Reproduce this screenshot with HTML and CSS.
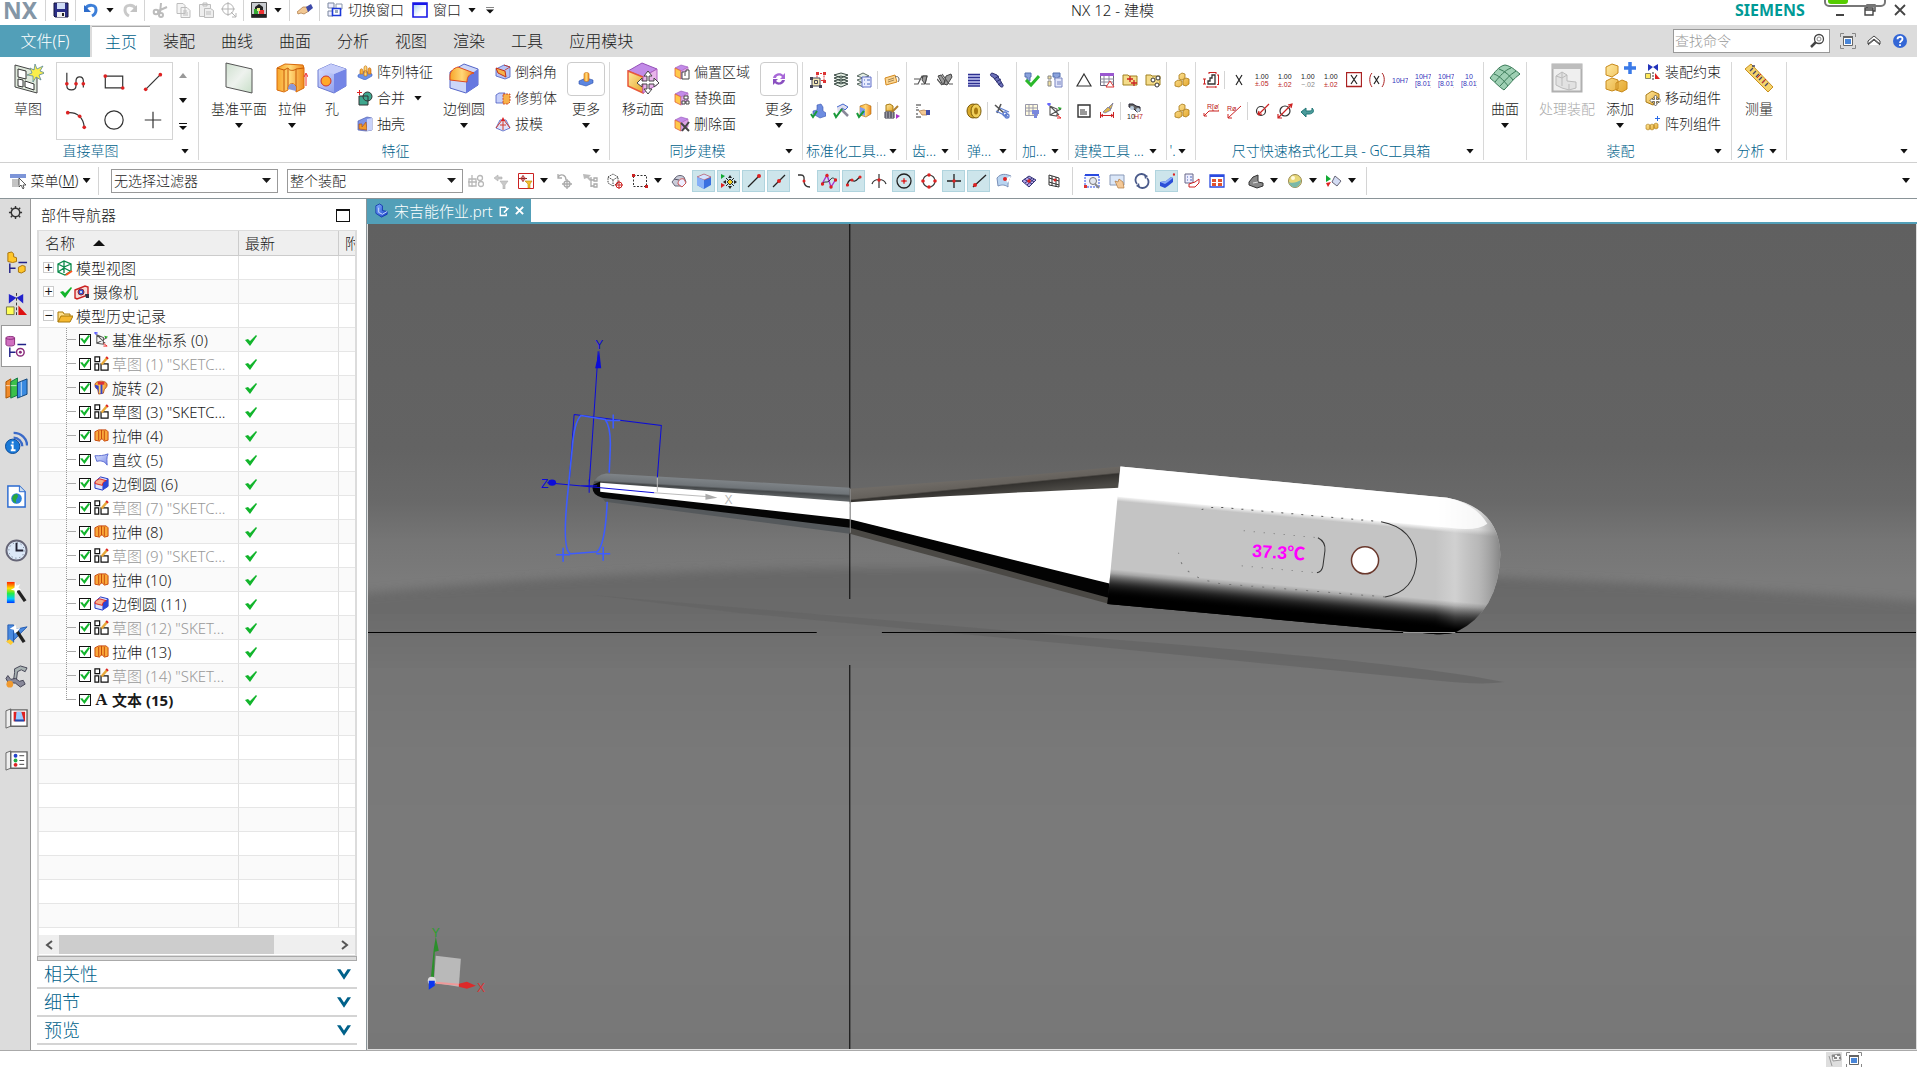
FILE: index.html
```html
<!DOCTYPE html>
<html lang="zh-CN">
<head>
<meta charset="utf-8">
<title>NX 12 - 建模</title>
<link rel="stylesheet" href="styles.css">
</head>
<body>
<svg class="defs" aria-hidden="true">
<defs>
<linearGradient id="gOr" x2="1"><stop offset="0" stop-color="#f7a52a"/><stop offset=".5" stop-color="#ffd777"/><stop offset="1" stop-color="#f08a1c"/></linearGradient>
<linearGradient id="gBl" x2="1" y2="1"><stop offset="0" stop-color="#dfe6ff"/><stop offset="1" stop-color="#7b8ce8"/></linearGradient>
<linearGradient id="gBd" y2="1" x2="1"><stop offset="0" stop-color="#7fb0ff"/><stop offset="1" stop-color="#1a3fc8"/></linearGradient>
<linearGradient id="gYe" x2="1" y2="1"><stop offset="0" stop-color="#ffe9a0"/><stop offset="1" stop-color="#e5a72c"/></linearGradient>
<linearGradient id="gGn" x2="1" y2="1"><stop offset="0" stop-color="#cfe0cf"/><stop offset=".5" stop-color="#eef2ee"/><stop offset="1" stop-color="#c8dfc8"/></linearGradient>
<linearGradient id="gWin" x2="1" y2="1"><stop offset="0" stop-color="#9cc8f4"/><stop offset=".6" stop-color="#fff"/></linearGradient>
<linearGradient id="gRb" y2="1" x2="0"><stop offset="0" stop-color="#f20"/><stop offset=".3" stop-color="#fd0"/><stop offset=".55" stop-color="#2e4"/><stop offset=".8" stop-color="#0cf"/><stop offset="1" stop-color="#03f"/></linearGradient>
</defs>
<symbol id="save" viewBox="0 0 16 16"><path d="M1 1h14v14H2L1 14z" fill="#2b2f86" stroke="#14143c"/><path d="M4 1h8v6H4z" fill="#cfdcf5"/><path d="M4 10h8v5H4z" fill="#eee"/><path d="M9 11h2v3H9z" fill="#222"/></symbol>
<symbol id="undo" viewBox="0 0 16 16"><path d="M2 7C5 2 13 2 13 8c0 3-2 5-4 6" fill="none" stroke="#3d7fd8" stroke-width="3"/><path d="M1 3v7h7z" fill="#2d6ccb"/></symbol>
<symbol id="redo" viewBox="0 0 16 16"><path d="M14 7C11 2 3 2 3 8c0 3 2 5 4 6" fill="none" stroke="#c9c9c9" stroke-width="3"/><path d="M15 3v7H8z" fill="#c3c3c3"/></symbol>
<symbol id="cut" viewBox="0 0 16 16"><g fill="none" stroke="#bcbcbc" stroke-width="2"><circle cx="4" cy="10" r="2.3"/><circle cx="9" cy="13" r="2"/><path d="M6 9l9-4M8 11L9 1"/></g></symbol>
<symbol id="copy" viewBox="0 0 16 16"><g fill="#f4f4f4" stroke="#bdbdbd"><path d="M2 1.500h6l2 2v8H2zM6 5.500h6l3 3v7H6z"/><path d="M8 9h4M8 11h5M8 13h5"/></g></symbol>
<symbol id="paste" viewBox="0 0 16 16"><g fill="#eee" stroke="#bdbdbd"><path d="M1.500 2.500h11v12h-11zM5 1h4v3H5z"/><path d="M6.500 6.500h6l3 2v7h-9z"/><path d="M8 10h5M8 12h5"/></g></symbol>
<symbol id="target" viewBox="0 0 16 16"><g fill="none" stroke="#b5b5b5"><circle cx="7" cy="7" r="5.500"/><path d="M7 0v14M0 7h14M10 10l5 5M15 11v4h-4"/></g></symbol>
<symbol id="touch" viewBox="0 0 16 16"><path d="M.5.500h15v15H.5z" fill="#c9ccd0" stroke="#444"/><path d="M1 12h14v3H1z" fill="#222"/><path d="M4 5l4-3 4 3v4H4z" fill="#222"/><path d="M3 7h4v5H3z" fill="#3a3"/><path d="M8 8h5v4H8z" fill="#e33"/><path d="M6 6h3v3H6z" fill="#ee8"/></symbol>
<symbol id="hand" viewBox="0 0 16 16"><path d="M0 10l6-5 4 0 2 4-5 3-3-1-3 1z" fill="#f2c894" stroke="#a87440" stroke-width=".7"/><path d="M9 5l5-3 2 4-5 4z" fill="#3c48a8"/></symbol>
<symbol id="switch" viewBox="0 0 16 16"><path d="M1 1h6v5H1zM1 9h5v5H1z" fill="#eef" stroke="#7b879e"/><path d="M9 2h6v5H9z" fill="#fff" stroke="#8a96aa"/><path d="M5.500 6.500h8v7h-8z" fill="#fff" stroke="#1d39d8" stroke-width="1.600"/><path d="M8 8h3v3H8z" fill="#9ab"/></symbol>
<symbol id="win" viewBox="0 0 16 16"><path d="M1 1h14v14H1z" fill="url(#gWin)" stroke="#1717e8" stroke-width="1.600"/><path d="M1 2h14" stroke="#1717e8" stroke-width="2"/></symbol>
<symbol id="mag" viewBox="0 0 16 16"><circle cx="10" cy="6" r="4.500" fill="none" stroke="#444" stroke-width="1.300"/><circle cx="10" cy="6" r="2" fill="none" stroke="#888"/><path d="M7 9l-5 5" stroke="#444" stroke-width="2.500"/></symbol>
<symbol id="full" viewBox="0 0 16 16"><path d="M.5 4V.5H4M12 .5h3.500V4M15.500 12v3.500H12M4 15.500H.5V12" fill="none" stroke="#888"/><path d="M3.500 3.500h9v9h-9z" fill="#fff" stroke="#666"/><path d="M5 6h6v5H5z" fill="#4a86d8"/><path d="M3 3h10v2H3z" fill="#666"/></symbol>
<symbol id="up" viewBox="0 0 16 16"><path d="M2 8l6-5 6 5v3L8 6l-6 5zM2 12l6-5 6 5" fill="#fff" stroke="#444"/></symbol>
<symbol id="help" viewBox="0 0 16 16"><circle cx="8" cy="8" r="7" fill="#3467d6"/><path d="M5.500 6.200C5.500 3 10.500 3 10.500 6c0 2-2.500 2-2.500 4M8 11.300v1.600" fill="none" stroke="#fff" stroke-width="1.800"/></symbol>
<symbol id="sketch" viewBox="0 0 32 32"><path d="M3 3l22 6v22L3 25z" fill="#dfe9dc" stroke="#444"/><path d="M6 7l8 2v8l-8-2zM6 17l5 1v7l-5-1zM13 19l9 3v6l-9-3z" fill="#fff" stroke="#333"/><path d="M23 2l2 5 6-3-3 5 5 2-6 2 2 5-5-3-3 5v-6l-6-1 5-2-2-5 4 2z" fill="#f9ee4a" stroke="#5c8a9a" stroke-width=".8"/></symbol>
<symbol id="profile" viewBox="0 0 24 24"><path d="M2 2v14c0 6 10 6 10 0V11c0-6 8-6 8 0v7" fill="none" stroke="#333" stroke-width="1.300"/><g fill="#d22"><circle cx="2" cy="14" r="2"/><circle cx="12" cy="14" r="2"/><circle cx="20" cy="14" r="2"/></g></symbol>
<symbol id="rect" viewBox="0 0 24 24"><path d="M2.500 5.500h19v13h-19z" fill="none" stroke="#333" stroke-width="1.300"/><g fill="#d22"><circle cx="2.500" cy="5.500" r="2"/><circle cx="21.500" cy="18.500" r="2"/></g></symbol>
<symbol id="line" viewBox="0 0 24 24"><path d="M4 20L20 4" stroke="#333" stroke-width="1.300"/><g fill="#d22"><circle cx="4" cy="20" r="2"/><circle cx="20" cy="4" r="2"/></g></symbol>
<symbol id="arc" viewBox="0 0 24 24"><path d="M3 4c10-1 17 5 18 16" fill="none" stroke="#333" stroke-width="1.300"/><g fill="#d22"><circle cx="3" cy="4" r="2"/><circle cx="16" cy="8" r="2"/><circle cx="21" cy="20" r="2"/></g></symbol>
<symbol id="circle" viewBox="0 0 24 24"><circle cx="12" cy="12" r="10" fill="none" stroke="#333" stroke-width="1.300"/></symbol>
<symbol id="plus" viewBox="0 0 24 24"><path d="M12 3v18M3 12h18" stroke="#333" stroke-width="1.300"/></symbol>
<symbol id="plane" viewBox="0 0 32 32"><path d="M3 1l26 6v24L3 25z" fill="url(#gGn)" stroke="#555"/></symbol>
<symbol id="extrude" viewBox="0 0 32 32"><path d="M1 6l8-4 18 1 1 3v20l-8 4V24c-4-5-8-2-8 4l-4 2-7-2z" fill="url(#gOr)" stroke="#d96a0a"/><path d="M1 6l7 2 4-2c1 3 6 3 8 1l8-1M8 8v21M12 7v20M20 7v22" fill="none" stroke="#c85b08"/><path d="M12 27c0-5 5-8 8-2v4z" fill="#8a98d8"/><path d="M30 24V12M28 15l2-4 2 4" fill="none" stroke="#e33"/></symbol>
<symbol id="hole" viewBox="0 0 32 32"><path d="M2 8l13-6 15 5v17l-12 7L2 25z" fill="url(#gBl)" stroke="#6d7bd0"/><path d="M18 12l12-5v17l-12 7z" fill="#7485e6"/><path d="M2 8l13-6 15 5-12 5z" fill="#c4ccfa"/><circle cx="10" cy="19" r="5" fill="#ffa928" stroke="#c33"/></symbol>
<symbol id="blend" viewBox="0 0 32 32"><path d="M2 10L16 2l14 5v16l-12 8-16-5z" fill="#ccd6f8" stroke="#5565c8"/><path d="M18 16l12-9v16l-12 8z" fill="#6678e0"/><path d="M2 18V14c0-5 4-8 8-9l16 6c-5 1-7 4-7 9z" fill="url(#gOr)" stroke="#e04a20"/></symbol>
<symbol id="patt" viewBox="0 0 16 16"><path d="M1 11l7-4 7 3v2l-7 4-7-3z" fill="#6d92e8" stroke="#3a5ec0" stroke-width=".6"/><g fill="url(#gOr)" stroke="#b86a10" stroke-width=".6"><path d="M3 7c0-3 3-3 3 0v3H3zM7 4c0-3 3-3 3 0v4H7zM7 8c0-2 3-2 3 0v4H7zM11 6c0-3 3-3 3 0v4h-3z"/></g></symbol>
<symbol id="unite" viewBox="0 0 16 16"><path d="M2 6h9v9H2z" fill="#3fa78e" stroke="#333"/><circle cx="10.500" cy="6.500" r="4.500" fill="#3fa78e" stroke="#333"/><path d="M6 6h5v5" fill="none" stroke="#333"/><path d="M2.500 0v5M0 2.500h5" stroke="#d22"/></symbol>
<symbol id="shell" viewBox="0 0 16 16"><path d="M1 5l9-4 5 1v12l-6 1-8-1z" fill="#7e93e6" stroke="#5060b0" stroke-width=".7"/><path d="M2 8h3v3l4-5 1 8-8-1z" fill="#f29a2a" stroke="#a52" stroke-width=".7"/><path d="M10 3l5-1v12l-5 1z" fill="#c9d3fa"/></symbol>
<symbol id="chamfer" viewBox="0 0 16 16"><path d="M1 5l8-4 6 2v10l-5 2-9-3z" fill="#b6c3f6" stroke="#4a5cc0" stroke-width=".8"/><path d="M1 4l9 3 1 6-8-4z" fill="#f7b24a" stroke="#c3301a"/><path d="M9 1l6 2-5 3" fill="none" stroke="#c3301a" stroke-width=".8"/></symbol>
<symbol id="trim" viewBox="0 0 16 16"><path d="M1 5l3-2h6v9l-2 1H1z" fill="#c6cffa" stroke="#4a5cc0" stroke-width=".8"/><path d="M8 4h7v8l-2 2H8z" fill="#f7b04a" stroke="#c3301a" stroke-width=".8" stroke-dasharray="2 1"/></symbol>
<symbol id="draft" viewBox="0 0 16 16"><path d="M1 12l4-8h6l4 8-7 3z" fill="#dfe3fc" stroke="#4a5cc0" stroke-width=".8"/><path d="M1 12L7 4M15 12L9 4M8 3v11M5 9h6" fill="none" stroke="#d43a2a"/><path d="M8 1l2 4H6z" fill="#d22"/></symbol>
<symbol id="more1" viewBox="0 0 16 16"><path d="M1 10l7-3 7 2v3l-7 3-7-2z" fill="#5d86e0" stroke="#2c4faa" stroke-width=".6"/><path d="M6 3c0-2 5-2 5 0v6c0 2-5 2-5 0z" fill="url(#gOr)" stroke="#c26a12" stroke-width=".6"/></symbol>
<symbol id="more2" viewBox="0 0 16 16"><path d="M2 7c1-5 8-6 10-3l2-2v6H9l2-2C9 4 6 4 5 7z" fill="#a868d8"/><path d="M14 9c-1 5-8 6-10 3l-2 2V8h5l-2 2c2 2 5 2 6-1z" fill="#8a50c0"/></symbol>
<symbol id="moveface" viewBox="0 0 32 32"><path d="M1 9L15 1l15 6-14 8z" fill="#c28be8" stroke="#9450b8"/><path d="M1 9l15 6v16L1 24z" fill="url(#gYe)" stroke="#e8583a" stroke-width="1.500"/><path d="M16 15l14-8v16l-14 8z" fill="#e8b4ea" stroke="#b060c0"/><path d="M21 9l4 5h-3v5h5v-3l5 5-5 4v-3h-5v5h3l-4 5-4-5h3v-5h-5v3l-5-4 5-5v3h5v-5h-3z" fill="#fff" stroke="#444"/></symbol>
<symbol id="face" viewBox="0 0 16 16"><path d="M1 4l6-3 7 2-6 4z" fill="#c28be8" stroke="#9450b8" stroke-width=".6"/><path d="M1 4l6 3v8l-6-3z" fill="#ffc94a" stroke="#e0603a" stroke-width=".8"/><path d="M7 7l7-4v8l-7 4z" fill="#dca5e6" stroke="#b060c0" stroke-width=".6"/></symbol>
<symbol id="offset" viewBox="0 0 16 16"><use href="#face"/><path d="M8 8h4V6h3v9H8zM11 9v3" fill="#fff" stroke="#444"/></symbol>
<symbol id="replace" viewBox="0 0 16 16"><use href="#face"/><path d="M10 6h4v3h-4zM8 11h3v3H8zM12 11h3v3h-3z" fill="#fff" stroke="#444"/></symbol>
<symbol id="delface" viewBox="0 0 16 16"><use href="#face"/><path d="M7 7l8 8M15 6l-7 9" stroke="#444" stroke-width="2"/></symbol>
<symbol id="s1" viewBox="0 0 16 16"><path d="M7 1.500h7v7H7z" fill="none" stroke="#d33" stroke-dasharray="2 1"/><path d="M2 6h8v8H2z" fill="#f4e9b8" stroke="#445"/><path d="M4.500 8.500h3v3h-3z" fill="none" stroke="#445"/><g fill="#445"><path d="M0 5h3v3H0zM0 13h3v3H0zM9 13h3v3H9z"/></g><path d="M6 0h3v3H6zM13 0h3v3h-3zM13 8h3v3h-3z" fill="#d33"/></symbol>
<symbol id="s2" viewBox="0 0 16 16"><g fill="#e4eee4" stroke="#3a4a44"><path d="M1 12l7-2 7 2-7 3zM1 9l7-2 7 2-7 3zM1 6l7-2 7 2-7 3zM1 3l7-2 7 2-7 3z"/></g></symbol>
<symbol id="s3" viewBox="0 0 16 16"><path d="M1 12l6-2 6 2-6 3zM1 8l6-2 6 2-6 3zM1 4l6-3 6 3-6 2z" fill="#e4eee4" stroke="#5a6a64"/><path d="M6 5h9v10H6z" fill="#e8ecff" stroke="#6270c8"/><path d="M8 8h1M11 8h3M8 12h1M11 12h3" stroke="#46b"/></symbol>
<symbol id="s4" viewBox="0 0 16 16"><path d="M1 6l10-3 2 7-11 3z" fill="#fbd590" stroke="#d48a20"/><path d="M4 8l6-2M4 10l6-2" stroke="#a85"/><path d="M11 5c4-2 5 3 3 5" fill="none" stroke="#666"/></symbol>
<symbol id="s5" viewBox="0 0 16 16"><path d="M7 2l4-1 2 3v4l3 2v3l-6 2-7-4V8l4-1z" fill="#6d8ce0" stroke="#3a56b0" stroke-width=".6"/><path d="M1 11l2 3 4-6" fill="none" stroke="#1a9a3a" stroke-width="2"/></symbol>
<symbol id="s6" viewBox="0 0 16 16"><path d="M4 4l6-3 5 3-3 3-3-2-4 7" fill="#dde" stroke="#4468d0"/><path d="M8 6l7 7" stroke="#889" stroke-width="2.500"/><path d="M1 10l2 4 6-8" fill="none" stroke="#1a9a3a" stroke-width="2"/></symbol>
<symbol id="s7" viewBox="0 0 16 16"><path d="M4 3l6-2 5 2v8l-5 3-6-2z" fill="url(#gOr)" stroke="#a86a10" stroke-width=".6"/><path d="M4 4l5 2v7l-5-2z" fill="#7d9cf0"/><path d="M1 10l2 4 5-6" fill="none" stroke="#1a9a3a" stroke-width="2"/></symbol>
<symbol id="s8" viewBox="0 0 16 16"><path d="M2 2l4-1 3 2v5H2z" fill="url(#gYe)" stroke="#a87a10"/><path d="M1 9h9v6H1z" fill="#fff" stroke="#334"/><path d="M1 11h9M1 13h9M4 9v6M7 9v6" stroke="#334"/><path d="M14 3L8 9" stroke="#b08030" stroke-width="2"/><path d="M12 11l4 2-4 3z" fill="#a3c"/></symbol>
<symbol id="g1" viewBox="0 0 16 16"><path d="M0 12h4l4-8h5l-2 8H7M0 7h6M8 4l4 6M12 12h4" fill="none" stroke="#555" stroke-width="1.200"/><path d="M9 4h4l-2 8-3-4z" fill="#999" stroke="#444"/></symbol>
<symbol id="g2" viewBox="0 0 16 16"><path d="M1 4l3-1 4 6-2 4zM9 4l5-2 1 3-5 8-3-1z" fill="#999" stroke="#444"/><path d="M0 7l5 6M5 2l7 10M12 12h4" fill="none" stroke="#555" stroke-width="1.200"/></symbol>
<symbol id="g3" viewBox="0 0 16 16"><path d="M2 2h5M2 7h3M2 14h5M3 4v1M3 10v2" stroke="#333"/><path d="M5 8l5-1 3 1v4H8z" fill="#f2c894" stroke="#a87440" stroke-width=".7"/><path d="M12 7h4v5h-4z" fill="#4450a8"/></symbol>
<symbol id="t1" viewBox="0 0 16 16"><path d="M2 2h12v12H2z" fill="#c9cdf4"/><path d="M2 2.500h12M2 5.500h12M2 8.500h12M2 11.500h12M2 14h12" stroke="#2c2f90" stroke-width="1.500"/></symbol>
<symbol id="t2" viewBox="0 0 16 16"><path d="M3 1c-3 1-1 4 1 4l7 9c1 2 4 1 3-1L8 3z" fill="#6a6fb8" stroke="#2c2f70"/><path d="M5 7l5-3M7 10l5-3M9 13l4-3" stroke="#2c2f70"/></symbol>
<symbol id="t3" viewBox="0 0 16 16"><ellipse cx="7" cy="8" rx="6" ry="7" fill="#d8a92a" stroke="#7a5a08"/><ellipse cx="10" cy="8" rx="5" ry="7" fill="#f0cf5a" stroke="#7a5a08"/><ellipse cx="10" cy="8" rx="2" ry="3.500" fill="#a87a10"/></symbol>
<symbol id="t4" viewBox="0 0 16 16"><path d="M1 2l9 8M7 1L3 10" stroke="#555" stroke-width="1.600"/><g fill="none" stroke="#5f7ed0" stroke-width="1.300"><circle cx="11" cy="11" r="2"/><circle cx="13" cy="13" r="2"/><path d="M2 8l12 6M6 5l9 4"/></g></symbol>
<symbol id="k1" viewBox="0 0 16 16"><path d="M1 1h6v4H6v4H3V5H1z" fill="#8aa2dc" stroke="#5570b0"/><path d="M2 8l5 5 8-9" fill="none" stroke="#2bb82b" stroke-width="3"/></symbol>
<symbol id="k2" viewBox="0 0 16 16"><path d="M6 1h7v4h-2v3H8V5H6z" fill="#8aa2dc" stroke="#5570b0"/><path d="M8 6h7v9H8z" fill="#e2e6fb" stroke="#7884c0"/><path d="M1 4h3v3H1zM1 9h3v5H1z" fill="#f0e0a0" stroke="#888"/><path d="M10 10h4M10 12h4" stroke="#7884c0"/></symbol>
<symbol id="k3" viewBox="0 0 16 16"><path d="M1.500 1.500h12v11h-12z" fill="#fffbe0" stroke="#99a"/><path d="M1 5h12M1 8h12M5 1v11M9 1v11" stroke="#99a"/><path d="M8 7h7v4h-2v4h-3v-4H8z" fill="#7a88dc"/></symbol>
<symbol id="csys" viewBox="0 0 16 16"><path d="M3 3v9l7 1V6zM3 12l11-6M3 3l9 9" fill="none" stroke="#555" stroke-width="1.100"/><path d="M0 1h4M2 0v3" stroke="#33f"/><path d="M11 4l4 1-3 2z" fill="#2a2"/><path d="M10 12l4 3M10 15h4" stroke="#e22"/></symbol>
<symbol id="m1" viewBox="0 0 16 16"><path d="M8 2l7 12H1z" fill="none" stroke="#333" stroke-width="1.200"/></symbol>
<symbol id="m2" viewBox="0 0 16 16"><path d="M1.500 1.500h13v12h-13z" fill="#fff" stroke="#667"/><path d="M1 1h14v3H1z" fill="#9a58d0"/><path d="M1 7h14M1 10h14M5 4v9M10 4v9" stroke="#889"/><path d="M11 9l4 6H7z" fill="#fff" stroke="#d33"/></symbol>
<symbol id="m3" viewBox="0 0 16 16"><path d="M1 3h5l1 1h8v9H1z" fill="#f4dc8a" stroke="#a08020"/><path d="M8 4v6M5 7h6M12 8v6M9 11h6" stroke="#c22" stroke-width="1.300"/></symbol>
<symbol id="m4" viewBox="0 0 16 16"><path d="M1 3h5l1 1h8v9H1z" fill="#f4dc8a" stroke="#a08020"/><g fill="#fff" stroke="#333"><circle cx="8" cy="8" r="2"/><circle cx="13" cy="6" r="2"/><circle cx="12" cy="13" r="2"/></g></symbol>
<symbol id="m5" viewBox="0 0 16 16"><path d="M2 2h12v12H2z" fill="#fff" stroke="#333" stroke-width="1.400"/><path d="M4 7h5M4 9h7M4 11h7" stroke="#333"/></symbol>
<symbol id="m6" viewBox="0 0 16 16"><path d="M14 0l-4 4 2 2zM9 4l3 3-6 3-2-1z" fill="#e0b84a" stroke="#779" stroke-width=".8"/><path d="M1.500 9v6M14.500 9v6M2 12.500h12M4 11l-2 1.500L4 14M12 11l2 1.500-2 1.500" fill="none" stroke="#c22"/></symbol>
<symbol id="m7" viewBox="0 0 16 16"><path d="M2 1h4l3 2 4 1v4l-3 1-3-3-5-2z" fill="#666" stroke="#223"/><circle cx="5" cy="5" r="2" fill="#bcd"/><circle cx="11" cy="7" r="2" fill="#bcd"/><text x="0" y="16" class="tx">10</text><text x="7" y="16" class="tx r">H7</text></symbol>
<symbol id="asm" viewBox="0 0 16 16"><g fill="url(#gYe)" stroke="#a87a18" stroke-width=".8"><path d="M5 3l3-2 3 1v4l-3 2-3-1zM9 8l3-2 3 1v5l-3 2-3-1zM1 10l3-2 4 1v4l-3 2-4-1z"/></g></symbol>
<symbol id="dim" viewBox="0 0 16 16"><path d="M7 6h2V3h3v9H5V9h2z" fill="#fff" stroke="#333" stroke-width="1.300"/><path d="M6 .5h7M6 0v2M13 0v2M15.500 3v10M14 3h2M14 12.500h2M1.500 7v5M0 7h3M0 12h3M4 15h9M4 14v2M13 14v2" stroke="#c22"/></symbol>
<symbol id="x0" viewBox="0 0 16 16"><path d="M5 3l6 10M11 3L5 13" stroke="#222" stroke-width="1.200"/></symbol>
<symbol id="n1" viewBox="0 0 16 16"><text x="1" y="7" class="tx">1.00</text><text x="1" y="14" class="tx r">±.05</text></symbol>
<symbol id="n2" viewBox="0 0 16 16"><text x="1" y="7" class="tx">1.00</text><text x="1" y="15" class="tx r">±.02</text></symbol>
<symbol id="n3" viewBox="0 0 16 16"><text x="1" y="7" class="tx">1.00</text><text x="1" y="15" class="tx y">−.02</text></symbol>
<symbol id="xb" viewBox="0 0 16 16"><path d="M.5.500h15v14H.5z" fill="#fff" stroke="#a22" stroke-width="1.300"/><path d="M5 3l6 9M11 3l-6 9" stroke="#222" stroke-width="1.200"/></symbol>
<symbol id="xp" viewBox="0 0 16 16"><path d="M5 4l5 8M10 4l-5 8" stroke="#222" stroke-width="1.200"/><path d="M3 1C0 4 0 11 3 15M13 1c3 3 3 10 0 14" fill="none" stroke="#a22"/></symbol>
<symbol id="h0" viewBox="0 0 16 16"><text x="0" y="11" class="tx b">10H7</text></symbol>
<symbol id="h1" viewBox="0 0 16 16"><text x="0" y="7" class="tx b">10H7</text><text x="0" y="14" class="tx b">[8.01]</text></symbol>
<symbol id="h2" viewBox="0 0 16 16"><text x="4" y="7" class="tx b">10</text><text x="0" y="14" class="tx b">[8.01]</text></symbol>
<symbol id="r1" viewBox="0 0 16 16"><path d="M16 8H6l-5 5M1 10v3h3" fill="none" stroke="#c22"/><text x="4" y="6" class="tx r">R[ø]</text></symbol>
<symbol id="r2" viewBox="0 0 16 16"><path d="M2 15L15 3M2 11v4h4" fill="none" stroke="#c22"/><text x="1" y="8" class="tx r">Rø</text></symbol>
<symbol id="d1" viewBox="0 0 16 16"><circle cx="7" cy="8" r="4.500" fill="none" stroke="#333" stroke-width="1.200"/><path d="M4 12L15 1M4 12l1-4M4 12l4-1" stroke="#c22" stroke-width="1.200" fill="none"/></symbol>
<symbol id="d2" viewBox="0 0 16 16"><circle cx="8" cy="8" r="5" fill="none" stroke="#333" stroke-width="1.200"/><path d="M1 15L15 1M11 2l4-1-1 4M1 11v4h4" stroke="#c22" stroke-width="1.200" fill="none"/></symbol>
<symbol id="ret" viewBox="0 0 16 16"><path d="M12 5c3 3 1 6-3 6H6v3l-5-5 5-4v3h3c3 0 3-1 3-3z" fill="#4a9a9a" stroke="#277"/></symbol>
<symbol id="surf" viewBox="0 0 32 32"><path d="M1 16C6 10 10 4 16 3c6 1 10 5 15 9-6 4-10 10-16 16C10 25 6 20 1 16z" fill="#9fd0b4" stroke="#3a7a58"/><path d="M5 12c6 2 11 8 14 12M10 7c6 2 11 7 14 11M6 20c5-6 10-12 16-14M11 24c5-5 9-11 16-15" fill="none" stroke="#3a7a58"/></symbol>
<symbol id="proc" viewBox="0 0 32 32"><path d="M1.500 2.500h29v27h-29z" fill="#efefef" stroke="#b0b0b0" stroke-width="2"/><path d="M1 2h30v5H1z" fill="#bdbdbd"/><path d="M5 14l6-4 5 3v6l9 1v6l-7 2-7-2-6-3z" fill="#e2e2e2" stroke="#bbb"/><path d="M11 10v14M16 13l-5 3-6-2M18 22v6" fill="none" stroke="#bbb"/></symbol>
<symbol id="add" viewBox="0 0 32 32"><g fill="url(#gYe)" stroke="#c88a1c"><path d="M2 5l6-3 6 2v7l-6 4-6-2zM2 19l6-3 6 2v9l-6 2-6-2zM12 21l6-3 5 2v7l-5 3-6-2z"/></g><path d="M26 0v12M20 6h12" stroke="#3a7ae8" stroke-width="3.500"/></symbol>
<symbol id="constr" viewBox="0 0 16 16"><path d="M3 0l5 3-5 4zM13 0L8 3l5 4z" fill="#23b"/><path d="M8 8v8" stroke="#333" stroke-dasharray="2 1"/><path d="M.5 9.500h5v5h-5z" fill="#ffe95a" stroke="#886"/><path d="M10 9l5 6h-5z" fill="#d22"/></symbol>
<symbol id="movecomp" viewBox="0 0 16 16"><path d="M1 5l6-4 7 3v7l-6 4-7-3z" fill="url(#gYe)" stroke="#a87a18"/><path d="M10.500 5l2 2.500h-1v2h2v-1.500l2.500 2.500-2.500 2.500v-1.500h-2v2h1L10.500 16l-2-2.500h1v-2h-2V13L5 10.500 7.500 8v1.500h2v-2h-1z" fill="#fff" stroke="#444" stroke-width=".7"/></symbol>
<symbol id="pattcomp" viewBox="0 0 16 16"><g fill="url(#gYe)" stroke="#a87a18" stroke-width=".6"><path d="M1 9l2-1 2 1v4l-2 1-2-1zM5 9l2-1 2 1v4l-2 1-2-1zM9 8l2-1 2 1v4l-2 1-2-1z"/></g><path d="M12.500 0v5M10 2.500h5" stroke="#2a6ae8"/></symbol>
<symbol id="ruler" viewBox="0 0 32 32"><path d="M2 7l6-5 22 23-5 5z" fill="#f5d36a" stroke="#c89020"/><path d="M9 4l3 0M7 9l3-3M10 12l3-3M13 15l3-3M16 18l3-3M19 21l3-3M22 24l3-3" stroke="#446" stroke-width="1.300"/><path d="M14 16l4-4M19 21l4-4" stroke="#d22"/></symbol>
<symbol id="menu" viewBox="0 0 16 16"><path d="M0 1h16v4H0z" fill="#7d95d8"/><path d="M2 7h8M2 9h8M2 11h8M2 13h6" stroke="#888"/><path d="M9 5v9l2-2 2 4 1-1-1-3h3z" fill="#fff" stroke="#333" stroke-width=".8"/></symbol>
<symbol id="q1" viewBox="0 0 16 16"><g fill="none" stroke="#b8b8b8" stroke-width="1.300"><path d="M1 6h7v7H1zM4 2v12M0 9h9"/><circle cx="12" cy="5" r="2.500"/><circle cx="13" cy="11" r="2.500"/></g></symbol>
<symbol id="q2" viewBox="0 0 16 16"><path d="M1 5l4-3v2h4v2H5v2zM7 8h8l-3 4v4h-2v-4z" fill="#c9c9c9" stroke="#b0b0b0" stroke-width=".6"/></symbol>
<symbol id="q3" viewBox="0 0 16 16"><path d="M.5.500h15v15H.5z" fill="#fff" stroke="#c22"/><path d="M5 2v7M1 5.500h8" stroke="#822"/><circle cx="5" cy="5.500" r="2" fill="none" stroke="#c44"/><path d="M7 8h7l-2 3v4h-2v-4z" fill="#f5c030" stroke="#b80" stroke-width=".6"/></symbol>
<symbol id="q4" viewBox="0 0 16 16"><g fill="none" stroke="#aaa" stroke-width="1.300"><path d="M1 1v4h4M1 4c3-4 8-2 8 3"/><circle cx="10" cy="11" r="3"/><path d="M10 6v10M5 11h10"/></g></symbol>
<symbol id="q5" viewBox="0 0 16 16"><path d="M1 1l8 1-2 2 3 3-2 1-3-3-3 1z" fill="#bbb"/><path d="M9 4v10M9 7h3M9 13h3M12 5h3v3h-3zM12 11h3v3h-3z" fill="none" stroke="#aaa" stroke-width="1.300"/></symbol>
<symbol id="q6" viewBox="0 0 16 16"><path d="M1 4l5-3 5 3v6l-5 3-5-3zM1 4l5 3 5-3M6 7v6" fill="none" stroke="#444" stroke-dasharray="1.500 1"/><circle cx="12" cy="12" r="3" fill="none" stroke="#c22"/><path d="M12 7.500V16M8 12h8" stroke="#c22"/></symbol>
<symbol id="q7" viewBox="0 0 16 16"><path d="M1.500 2.500h13v11h-13z" fill="none" stroke="#333" stroke-dasharray="2 1.500"/><path d="M0 1h3v3H0zM13 12h3v3h-3z" fill="#c22"/></symbol>
<symbol id="q8" viewBox="0 0 16 16"><path d="M1 9l4-5c2-2 6-2 8 0l2 5-3 4H4z" fill="#c9cbd8" stroke="#667"/><path d="M7 11c0-4 3-6 6-5l2 4-4 4z" fill="#eef" stroke="#c55"/><path d="M3 6l5 1" stroke="#556"/></symbol>
<symbol id="q9" viewBox="0 0 16 16"><path d="M1 4l7-3 7 3v8l-7 4-7-4z" fill="#3a70e0"/><path d="M1 4l7-3 7 3-7 3z" fill="#d4e4ff" stroke="#c44" stroke-width=".6"/><path d="M1 4l7 3v9l-7-4z" fill="#86b0f8"/></symbol>
<symbol id="p0" viewBox="0 0 16 16"><path d="M9 2l2 3H7zM9 16l2-3H7zM2 9l3-2v4zM16 9l-3-2v4z" fill="#222"/><path d="M9 6l3 3-3 3-3-3z" fill="#f5d020" stroke="#333"/><path d="M5 5l2 2M13 5l-2 2M5 13l2-2M13 13l-2-2" stroke="#222"/><path d="M0 1l4 2-4 3z" fill="#1a3"/><path d="M0 10l4 2-4 3z" fill="#d22"/></symbol>
<symbol id="p1" viewBox="0 0 16 16"><path d="M2 14L13 3" stroke="#222" stroke-width="1.300"/><circle cx="13" cy="3" r="2" fill="#d22"/></symbol>
<symbol id="p2" viewBox="0 0 16 16"><path d="M2 14L14 2" stroke="#222" stroke-width="1.300"/><circle cx="8" cy="8" r="2" fill="#d22"/></symbol>
<symbol id="p3" viewBox="0 0 16 16"><path d="M2 2h3c4 0 3 4 3 6s0 6 6 6" fill="none" stroke="#333" stroke-width="1.300"/><circle cx="8" cy="8" r="1.500" fill="#d22"/></symbol>
<symbol id="p4" viewBox="0 0 16 16"><path d="M1 11L6 2l4 12 5-8" fill="none" stroke="#a3c" stroke-width="1.400"/><path d="M1 11c3-4 5 0 8-4s4-1 6 0" fill="none" stroke="#333"/><g fill="#d22"><circle cx="1.500" cy="11" r="1.700"/><circle cx="6" cy="2.500" r="1.700"/><circle cx="10" cy="14" r="1.700"/><circle cx="14.500" cy="7" r="1.700"/></g></symbol>
<symbol id="p5" viewBox="0 0 16 16"><path d="M1 12c3-9 5-3 8-4s3-4 6-4" fill="none" stroke="#222" stroke-width="1.300"/><g fill="#d22"><circle cx="1.500" cy="12" r="1.600"/><circle cx="6" cy="7" r="1.600"/><circle cx="14" cy="4" r="1.600"/></g></symbol>
<symbol id="p6" viewBox="0 0 16 16"><path d="M1 11c2-6 12-6 14 0M8 1v14" fill="none" stroke="#333" stroke-width="1.200"/><circle cx="8" cy="7" r="1.700" fill="#d22"/></symbol>
<symbol id="p7" viewBox="0 0 16 16"><circle cx="8" cy="8" r="7" fill="none" stroke="#222" stroke-width="1.300"/><path d="M8 5v6M5 8h6" stroke="#d22"/><circle cx="8" cy="8" r="1.500" fill="#d22"/></symbol>
<symbol id="p8" viewBox="0 0 16 16"><circle cx="8" cy="8" r="6" fill="none" stroke="#444" stroke-width="1.200"/><g fill="#d22"><circle cx="8" cy="2" r="1.800"/><circle cx="8" cy="14" r="1.800"/><circle cx="2" cy="8" r="1.800"/><circle cx="14" cy="8" r="1.800"/></g></symbol>
<symbol id="p9" viewBox="0 0 16 16"><path d="M8 1v14M1 8h14" stroke="#222" stroke-width="1.300"/><circle cx="8" cy="8" r="1.700" fill="#d22"/></symbol>
<symbol id="p10" viewBox="0 0 16 16"><path d="M2 14L15 2" stroke="#222" stroke-width="1.300"/><circle cx="4" cy="12" r="2" fill="#d22"/></symbol>
<symbol id="p11" viewBox="0 0 16 16"><path d="M1 5c4-5 9-4 14-2-3 4-3 7-3 11-4-3-7-2-10-1z" fill="#b9d4f0" stroke="#7a90b8"/><path d="M9 6l6-3-3 7z" fill="#fff"/><circle cx="9" cy="6" r="2" fill="#d22"/></symbol>
<symbol id="p12" viewBox="0 0 16 16"><path d="M1 8l7-5 7 4-7 7z" fill="#b8a8e8" stroke="#337"/><path d="M3 6l8 5M6 4l7 5M4 10l7-5M6 12l7-6" stroke="#337"/><circle cx="8" cy="8" r="1.800" fill="#d22"/></symbol>
<symbol id="p13" viewBox="0 0 16 16"><path d="M3 2l10 3v9L3 12zM3 5l10 3M3 9l10 3M6 3v10M10 4v10" fill="none" stroke="#333"/><circle cx="9" cy="7" r="1.500" fill="#d22"/></symbol>
<symbol id="v1" viewBox="0 0 16 16"><path d="M1 2h14v12H1z" fill="#f4f6ff" stroke="#2a4ae0" stroke-dasharray="2 1"/><path d="M1 2h14" stroke="#2a4ae0" stroke-width="2"/><circle cx="9" cy="8" r="3.500" fill="#e4e8f0" stroke="#777"/><path d="M11 11l4 4" stroke="#888" stroke-width="2"/><path d="M0 12h3v3H0z" fill="#d33"/></symbol>
<symbol id="v2" viewBox="0 0 16 16"><path d="M1 2h14v10H1z" fill="#dbe7f8" stroke="#8a9ab8"/><path d="M6 8l3 1 1-3 4 3 1 6H9z" fill="#f4c896" stroke="#b07a40" stroke-width=".7"/></symbol>
<symbol id="v3" viewBox="0 0 16 16"><path d="M3 11A6 6 0 0 1 12 3M13 5a6 6 0 0 1-9 8" fill="none" stroke="#4a5a8a" stroke-width="1.800"/><path d="M10 1l4 2-3 3zM6 15l-4-2 3-3z" fill="#4a5a8a"/></symbol>
<symbol id="v4" viewBox="0 0 16 16"><path d="M1 9l6-1 5-4 2 1v4l-5 4-3 2-5-2z" fill="#2a4ed8"/><path d="M1 9l6-1 5-4 2 1-5 4-3 2z" fill="#8aacf8"/><circle cx="15" cy="1.500" r="1.200" fill="#d22"/></symbol>
<symbol id="v5" viewBox="0 0 16 16"><path d="M1 1h8v9H1z" fill="#eef" stroke="#668"/><path d="M3 4h1M6 4h2M3 7h1M6 7h2" stroke="#46b"/><path d="M5 11l6-2 4-3v4l-4 4H5z" fill="#fff" stroke="#c22"/></symbol>
<symbol id="v6" viewBox="0 0 16 16"><path d="M1 2h14v12H1z" fill="#fff" stroke="#2a4ae0" stroke-width="1.300"/><path d="M1 3h14" stroke="#2a4ae0" stroke-width="2"/><path d="M3 6h4v3H3zM9 6h4v3H9zM3 10h4v3H3zM9 10h4v3H9z" fill="#e2532a"/></symbol>
<symbol id="v7" viewBox="0 0 16 16"><path d="M1 9l4-5 5-2v7l5 1v3l-6 2-8-3z" fill="#888" stroke="#333"/><path d="M5 10l5-1" stroke="#ddd"/></symbol>
<symbol id="v8" viewBox="0 0 16 16"><circle cx="8" cy="8" r="6.500" fill="#e8d878" stroke="#998a50"/><path d="M2 9c4 2 8 0 12-2-1 9-10 10-12 2z" fill="#7ab8a8"/><circle cx="6" cy="5" r="2" fill="#fffbe0"/></symbol>
<symbol id="v9" viewBox="0 0 16 16"><path d="M0 2l5 4-5 3z" fill="#1a3"/><path d="M0 10l5-1-3 5z" fill="#d22"/><path d="M9 3l6 5-4 5-5-4z" fill="#d4dcf4" stroke="#667"/></symbol>
<symbol id="gear" viewBox="0 0 16 16"><circle cx="8" cy="8" r="4.500" fill="none" stroke="#333" stroke-width="1.500"/><path d="M8 1v3M8 12v3M1 8h3M12 8h3M3 3l2 2M13 3l-2 2M3 13l2-2M13 13l-2-2" stroke="#333" stroke-width="1.500"/></symbol>
<symbol id="b1" viewBox="0 0 24 24"><path d="M3 2l4-1 2 2v3l3 1v4l-4 1-5-1zM14 17l4-2 3 1v5l-4 2-3-1z" fill="#ffc62a" stroke="#a87208"/><path d="M5 13v10M5 18h6M14 12h9" stroke="#228" stroke-width="1.500"/></symbol>
<symbol id="b2" viewBox="0 0 24 24"><path d="M4 1l8 4-8 6zM19 1l-7 4 7 6z" fill="#22c"/><path d="M12 0v24" stroke="#333" stroke-dasharray="3 2"/><path d="M1.500 14.500h8v8h-8z" fill="#ff5" stroke="#774"/><path d="M14 13l9 10h-9z" fill="#d11"/></symbol>
<symbol id="b3" viewBox="0 0 24 24"><path d="M1 3c0-2 9-2 9 0v7c0 2-9 2-9 0z" fill="#d070c0" stroke="#8a2a7a"/><path d="M1 3c0 2 9 2 9 0" fill="none" stroke="#8a2a7a"/><path d="M5 13v10M5 18h6M13 10h9" stroke="#228" stroke-width="1.500"/><circle cx="16" cy="18" r="4" fill="#fff" stroke="#8a2a7a" stroke-width="1.500"/><circle cx="16" cy="18" r="1.500" fill="#8a2a7a"/></symbol>
<symbol id="b4" viewBox="0 0 24 24"><path d="M1 5l5-3v18l-5 2z" fill="#f08a2a" stroke="#a50"/><path d="M6 5l7-4v18l-7 3z" fill="#3cc04a" stroke="#174"/><path d="M13 6l10-4v16l-10 4z" fill="#3a8ae0" stroke="#147"/><path d="M1 9h4M6 9h6M17 5v15" stroke="#fff" opacity=".7"/></symbol>
<symbol id="b5" viewBox="0 0 24 24"><path d="M9 7c5 0 9 4 9 9M9 2c8 0 14 6 14 13" fill="none" stroke="#3a6ac8" stroke-width="2.500"/><circle cx="8" cy="16" r="7.500" fill="#1a7ad8" stroke="#0a4a98"/><path d="M8 11v2M6 15h2v5M6 20h5" stroke="#fff" stroke-width="2" fill="none"/></symbol>
<symbol id="b6" viewBox="0 0 24 24"><path d="M3 1h12l6 6v16H3z" fill="#fff" stroke="#2a6ad0" stroke-width="1.500"/><path d="M15 1v6h6" fill="#cde" stroke="#2a6ad0"/><circle cx="12" cy="14" r="5.500" fill="#2a80d8"/><path d="M8 12c3-5 7-2 5 1s-2 4-1 6c-4-1-5-4-4-7z" fill="#2aa83a"/></symbol>
<symbol id="b7" viewBox="0 0 24 24"><circle cx="12" cy="12" r="10.500" fill="#dce8f8" stroke="#667" stroke-width="2"/><circle cx="12" cy="12" r="8" fill="none" stroke="#567" stroke-dasharray="1 3.200"/><path d="M12 4v8h7" fill="none" stroke="#223" stroke-width="2"/></symbol>
<symbol id="b8" viewBox="0 0 24 24"><path d="M2 1h8v22H2z" fill="url(#gRb)"/><path d="M12 8l9 13" stroke="#222" stroke-width="3.500"/><path d="M11 1l1 4 4-2-2 4 3 2-4 1-2 4-1-4-4-1 4-2z" fill="#fff"/></symbol>
<symbol id="b9" viewBox="0 0 24 24"><path d="M3 2h6v18H3zM9 7l14-3-14 14z" fill="#4a8ae0" stroke="#235ab0"/><path d="M12 8l8 12" stroke="#222" stroke-width="3.500"/><path d="M1 19l4-2 4 3-3 3z" fill="#fc3"/><path d="M11 2l1 4 4-1-3 4-3 2-1-4-4-1z" fill="#fff"/></symbol>
<symbol id="b10" viewBox="0 0 24 24"><path d="M10 4l6-3 7 2-2 4-4-2-4 2-1 8h-3l1-7z" fill="#a8b2b2" stroke="#445"/><path d="M3 11l3 4 5-1 4 3 4-1 2 4-5 3-5-4-8-1-2-4z" fill="#889" stroke="#445"/><circle cx="5" cy="20" r="3.500" fill="#f09a30"/></symbol>
<symbol id="b11" viewBox="0 0 24 24"><path d="M1 4l5-2v18l-5 2z" fill="#eee" stroke="#666"/><path d="M6 3h17v17H6z" fill="#fff" stroke="#666" stroke-width="1.500"/><path d="M9 5h12v10H9z" fill="#d22"/><path d="M12 5h5l3 10h-9z" fill="#9cf"/><path d="M10 13h10v2H10z" fill="#24a"/></symbol>
<symbol id="b12" viewBox="0 0 24 24"><path d="M1 4l5-2v18l-5 2z" fill="#eee" stroke="#666"/><path d="M6 3h17v17H6z" fill="#fff" stroke="#666" stroke-width="1.500"/><circle cx="11" cy="7" r="2" fill="#24c"/><circle cx="11" cy="12" r="2" fill="#2a4"/><circle cx="11" cy="16.500" r="2" fill="#d22"/><path d="M15 7h5M15 12h5M15 16h5" stroke="#444"/></symbol>
<symbol id="tick" viewBox="0 0 12 12"><path d="M0 6l3-1 2 2 6-6 1 1-7 10z" fill="#12b52c"/></symbol>
<symbol id="mv" viewBox="0 0 16 16"><path d="M1 4l6-3 7 3v7l-6 4-7-3zM1 4l6 3 7-3M7 1v12M1 12l6-4 6 3" fill="none" stroke="#0a8a4a" stroke-width="1.300"/><path d="M9 15l6-4" stroke="#f52" stroke-width="2"/></symbol>
<symbol id="cam" viewBox="0 0 16 16"><path d="M1 6l10-4 3 1v8L3 15l-2-1z" fill="#f6dcd8" stroke="#c22" stroke-width="1.400"/><circle cx="7" cy="8" r="3" fill="#35c" stroke="#923"/><circle cx="7" cy="8" r="1" fill="#fff"/><path d="M11 10h4v4h-3z" fill="#334"/></symbol>
<symbol id="fold" viewBox="0 0 16 16"><path d="M1 14V4h5l1 2h6v2" fill="#ffe08a" stroke="#a87808"/><path d="M1 14l3-6h12l-3 6z" fill="#f5b830" stroke="#a87808"/></symbol>
<symbol id="sk" viewBox="0 0 16 16"><path d="M1 1h5v5H1zM1 8.500h4V15H1zM7.500 8.500H15V15H7.500z" fill="#fff" stroke="#111" stroke-width="1.300"/><path d="M14 2L8 9" stroke="#e8a83a" stroke-width="2.500"/><path d="M13 1l2 2" stroke="#d22" stroke-width="2"/></symbol>
<symbol id="rev" viewBox="0 0 16 16"><path d="M1 5c0-5 13-5 13 0 0 3-2 4-3 5l-1 4-5 1-1-5C2 9 1 8 1 5z" fill="url(#gOr)" stroke="#b52"/><path d="M1 5l4 1v9l-1-5C2 9 1 8 1 5z" fill="#34c"/><path d="M7 4h2v11H7z" fill="#34c"/><path d="M4 2h7v3H4z" fill="#d33"/></symbol>
<symbol id="ex" viewBox="0 0 16 16"><path d="M1 4l4-2h8l2 2v9l-4 1c-2-3-4-3-5 0l-5-1z" fill="#f9a83a" stroke="#c8450a"/><path d="M5 3v10M8 2v10M11 3v10" stroke="#c8450a"/></symbol>
<symbol id="rule" viewBox="0 0 16 16"><path d="M1 4c5 0 9 0 14-2-2 4-1 8-1 12C11 9 6 9 3 10z" fill="url(#gBl)" stroke="#5a6ad0"/></symbol>
<symbol id="eb" viewBox="0 0 16 16"><path d="M1 6l6-5 8 2v8l-6 4-8-2z" fill="#dbe2fb" stroke="#1c2fc0"/><path d="M9 7l6-4v8l-6 4z" fill="#2a46d8"/><path d="M1 8c0-3 3-4 5-5l7 2c-3 1-4 2-4 5z" fill="#f9b08a" stroke="#d22"/></symbol>
<symbol id="part" viewBox="0 0 16 16"><path d="M2 3l4-2 3 2v5l5 1v3l-6 3-6-4z" fill="url(#gBd)" stroke="#0a2aa8" stroke-width=".8"/><path d="M5 5v5l4 2 5-3" fill="none" stroke="#cfe0ff"/></symbol>
<symbol id="edit" viewBox="0 0 16 16"><path d="M10 3H3v11h8v-3M3 3l7 0 2 3-4 4" fill="none" stroke="#fff" stroke-width="1.800"/><path d="M8 10l6-6" stroke="#fff" stroke-width="2"/></symbol>
<symbol id="flag" viewBox="0 0 16 16"><path d="M0 0h16v16H0z" fill="#dedede"/><path d="M3 4l3 10M6 3l8-1 1 6-8 1z" fill="#f6f6f6" stroke="#999"/><path d="M6 3h3v2H6zM11 2h3v2h-3zM8 5h3v2H8zM13 5h2v2h-2z" fill="#888"/></symbol>
<symbol id="chev" viewBox="0 0 16 12"><path d="M0 0h4l4 6 4-6h4L8 12z" fill="#00618a"/></symbol>
</svg>

<header class="title-bar">
  <span class="logo">NX</span><i class="sep"></i>
  <button class="ib" aria-label="保存"><svg><use href="#save"/></svg></button><i class="sep"></i>
  <button class="ib" aria-label="撤消"><svg><use href="#undo"/></svg></button><i class="dn"></i>
  <button class="ib redo" aria-label="重做"><svg><use href="#redo"/></svg></button><i class="sep"></i>
  <button class="ib" aria-label="剪切"><svg><use href="#cut"/></svg></button>
  <button class="ib" aria-label="复制"><svg><use href="#copy"/></svg></button>
  <button class="ib" aria-label="粘贴"><svg><use href="#paste"/></svg></button>
  <button class="ib"><svg><use href="#target"/></svg></button><i class="sep"></i>
  <button class="ib"><svg><use href="#touch"/></svg></button><i class="dn"></i><i class="sep"></i>
  <button class="ib"><svg><use href="#hand"/></svg></button><i class="sep"></i>
  <button class="tb"><svg><use href="#switch"/></svg>切换窗口</button>
  <button class="tb"><svg><use href="#win"/></svg>窗口<i class="dn"></i></button>
  <i class="dn bar"></i>
  <h1>NX 12 - 建模</h1>
  <span class="brand">SIEMENS</span>
  <div class="wc">
    <button aria-label="最小化"><svg viewBox="0 0 12 12"><path d="M2 11h8" stroke="#444" stroke-width="2"/></svg></button>
    <button aria-label="还原"><svg viewBox="0 0 12 12"><path d="M3 4V1h8v6H9M1 4h8v7H1zM1 6h8" fill="none" stroke="#444" stroke-width="1.400"/></svg></button>
    <button aria-label="关闭"><svg viewBox="0 0 12 12"><path d="M1 1l10 10M11 1L1 11" stroke="#444" stroke-width="1.800"/></svg></button>
  </div>
  <div class="battery"><i></i></div>
</header>

<nav class="tabs">
  <button class="file">文件(F)</button>
  <button class="on">主页</button><button>装配</button><button>曲线</button><button>曲面</button><button>分析</button><button>视图</button><button>渲染</button><button>工具</button><button>应用模块</button>
  <div class="find"><input type="text" placeholder="查找命令" aria-label="查找命令"><svg><use href="#mag"/></svg></div>
  <button class="ti" aria-label="全屏"><svg><use href="#full"/></svg></button>
  <button class="ti" aria-label="最小化功能区"><svg><use href="#up"/></svg></button>
  <button class="ti" aria-label="帮助"><svg><use href="#help"/></svg></button>
</nav>

<section class="ribbon">
  <div class="grp w-sketch"><div class="body">
    <button class="big b3"><svg><use href="#sketch"/></svg>草图</button>
    <div class="gallery"><button><svg><use href="#profile"/></svg></button><button><svg><use href="#rect"/></svg></button><button><svg><use href="#line"/></svg></button><button><svg><use href="#arc"/></svg></button><button><svg><use href="#circle"/></svg></button><button><svg><use href="#plus"/></svg></button></div>
    <div class="scroller"><i class="dn flip"></i><i class="dn"></i><i class="dn bar"></i></div>
  </div><div class="cap"><span>直接草图</span><i class="dn"></i></div></div>

  <div class="grp pad w-feature"><div class="body">
    <button class="big b4"><svg><use href="#plane"/></svg>基准平面<i class="dn"></i></button>
    <button class="big b2"><svg><use href="#extrude"/></svg>拉伸<i class="dn"></i></button>
    <button class="big b2"><svg><use href="#hole"/></svg>孔</button>
    <div class="col"><button><svg><use href="#patt"/></svg>阵列特征</button><button><svg><use href="#unite"/></svg>合并<i class="dn"></i></button><button><svg><use href="#shell"/></svg>抽壳</button></div>
    <button class="big b3"><svg><use href="#blend"/></svg>边倒圆<i class="dn"></i></button>
    <div class="col"><button><svg><use href="#chamfer"/></svg>倒斜角</button><button><svg><use href="#trim"/></svg>修剪体</button><button><svg><use href="#draft"/></svg>拔模</button></div>
    <button class="big more"><span><svg><use href="#more1"/></svg></span>更多<i class="dn"></i></button>
  </div><div class="cap"><span>特征</span><i class="dn"></i></div></div>

  <div class="grp pad w-sync"><div class="body">
    <button class="big b3"><svg><use href="#moveface"/></svg>移动面</button>
    <div class="col"><button><svg><use href="#offset"/></svg>偏置区域</button><button><svg><use href="#replace"/></svg>替换面</button><button><svg><use href="#delface"/></svg>删除面</button></div>
    <button class="big more"><span><svg><use href="#more2"/></svg></span>更多<i class="dn"></i></button>
  </div><div class="cap"><span>同步建模</span><i class="dn"></i></div></div>

  <div class="grp w-std"><div class="icons">
    <div><button class="ib"><svg><use href="#s1"/></svg></button><button class="ib"><svg><use href="#s2"/></svg></button><button class="ib"><svg><use href="#s3"/></svg></button><i class="sep"></i><button class="ib"><svg><use href="#s4"/></svg></button></div>
    <div><button class="ib"><svg><use href="#s5"/></svg></button><button class="ib"><svg><use href="#s6"/></svg></button><button class="ib"><svg><use href="#s7"/></svg></button><i class="sep"></i><button class="ib"><svg><use href="#s8"/></svg></button></div>
  </div><div class="cap"><span>标准化工具...</span><i class="dn"></i></div></div>

  <div class="grp w-s"><div class="icons">
    <div><button class="ib"><svg><use href="#g1"/></svg></button><button class="ib"><svg><use href="#g2"/></svg></button></div>
    <div><button class="ib"><svg><use href="#g3"/></svg></button></div>
  </div><div class="cap"><span>齿...</span><i class="dn"></i></div></div>

  <div class="grp w-m"><div class="icons">
    <div><button class="ib"><svg><use href="#t1"/></svg></button><button class="ib"><svg><use href="#t2"/></svg></button></div>
    <div><button class="ib"><svg><use href="#t3"/></svg></button><i class="sep"></i><button class="ib"><svg><use href="#t4"/></svg></button></div>
  </div><div class="cap"><span>弹...</span><i class="dn"></i></div></div>

  <div class="grp w-s"><div class="icons">
    <div><button class="ib"><svg><use href="#k1"/></svg></button><button class="ib"><svg><use href="#k2"/></svg></button></div>
    <div><button class="ib"><svg><use href="#k3"/></svg></button><button class="ib"><svg><use href="#csys"/></svg></button></div>
  </div><div class="cap"><span>加...</span><i class="dn"></i></div></div>

  <div class="grp w-model"><div class="icons">
    <div><button class="ib"><svg><use href="#m1"/></svg></button><button class="ib"><svg><use href="#m2"/></svg></button><button class="ib"><svg><use href="#m3"/></svg></button><button class="ib"><svg><use href="#m4"/></svg></button></div>
    <div><button class="ib"><svg><use href="#m5"/></svg></button><button class="ib"><svg><use href="#m6"/></svg></button><i class="sep"></i><button class="ib"><svg><use href="#m7"/></svg></button></div>
  </div><div class="cap"><span>建模工具 ...</span><i class="dn"></i></div></div>

  <div class="grp w-xs"><div class="icons">
    <div><button class="ib"><svg><use href="#asm"/></svg></button></div>
    <div><button class="ib"><svg><use href="#asm"/></svg></button></div>
  </div><div class="cap"><span>'.</span><i class="dn"></i></div></div>

  <div class="grp w-dim"><div class="icons">
    <div><button class="ib"><svg><use href="#dim"/></svg></button><i class="sep"></i><button class="ib"><svg><use href="#x0"/></svg></button><button class="ib"><svg><use href="#n1"/></svg></button><button class="ib"><svg><use href="#n2"/></svg></button><button class="ib"><svg><use href="#n3"/></svg></button><button class="ib"><svg><use href="#n2"/></svg></button><button class="ib"><svg><use href="#xb"/></svg></button><button class="ib"><svg><use href="#xp"/></svg></button><button class="ib"><svg><use href="#h0"/></svg></button><button class="ib"><svg><use href="#h1"/></svg></button><button class="ib"><svg><use href="#h1"/></svg></button><button class="ib"><svg><use href="#h2"/></svg></button></div>
    <div><button class="ib"><svg><use href="#r1"/></svg></button><button class="ib"><svg><use href="#r2"/></svg></button><i class="sep"></i><button class="ib"><svg><use href="#d1"/></svg></button><button class="ib"><svg><use href="#d2"/></svg></button><button class="ib"><svg><use href="#ret"/></svg></button></div>
  </div><div class="cap"><span>尺寸快速格式化工具 - GC工具箱</span><i class="dn"></i></div></div>

  <div class="grp w-surf"><div class="body mid"><button class="big b2"><svg><use href="#surf"/></svg>曲面<i class="dn"></i></button></div></div>

  <div class="grp pad w-asm"><div class="body">
    <button class="big b4" disabled><svg><use href="#proc"/></svg>处理装配</button>
    <button class="big b2"><svg><use href="#add"/></svg>添加<i class="dn"></i></button>
    <div class="col"><button><svg><use href="#constr"/></svg>装配约束</button><button><svg><use href="#movecomp"/></svg>移动组件</button><button><svg><use href="#pattcomp"/></svg>阵列组件</button></div>
  </div><div class="cap"><span>装配</span><i class="dn"></i></div></div>

  <div class="grp w-meas"><div class="body mid"><button class="big b2"><svg><use href="#ruler"/></svg>测量</button></div><div class="cap"><span>分析</span><i class="dn"></i></div></div>
  <div class="grp rest"><div class="cap"><span></span><i class="dn"></i></div></div>
</section>

<section class="select-bar">
  <button class="tb menu"><svg><use href="#menu"/></svg><span>菜单(<u>M</u>)</span><i class="dn"></i></button><i class="sep"></i>
  <div class="sel filter"><select aria-label="过滤器"><option>无选择过滤器</option></select></div>
  <div class="sel scope"><select aria-label="范围"><option>整个装配</option></select></div>
  <div class="tools">
    <button><svg><use href="#q1"/></svg></button><button><svg><use href="#q2"/></svg></button><button><svg><use href="#q3"/></svg></button><i class="dn"></i>
    <button><svg><use href="#q4"/></svg></button><button><svg><use href="#q5"/></svg></button><button><svg><use href="#q6"/></svg></button><button><svg><use href="#q7"/></svg></button><i class="dn"></i>
    <button><svg><use href="#q8"/></svg></button><button class="on"><svg><use href="#q9"/></svg></button><button class="on"><svg><use href="#p0"/></svg></button><button class="on"><svg><use href="#p1"/></svg></button><button class="on"><svg><use href="#p2"/></svg></button><button><svg><use href="#p3"/></svg></button><button class="on"><svg><use href="#p4"/></svg></button><button class="on"><svg><use href="#p5"/></svg></button><button><svg><use href="#p6"/></svg></button><button class="on"><svg><use href="#p7"/></svg></button><button><svg><use href="#p8"/></svg></button><button class="on"><svg><use href="#p9"/></svg></button><button class="on"><svg><use href="#p10"/></svg></button><button><svg><use href="#p11"/></svg></button><button><svg><use href="#p12"/></svg></button><button><svg><use href="#p13"/></svg></button>
    <i class="sep"></i>
    <button><svg><use href="#v1"/></svg></button><button><svg><use href="#v2"/></svg></button><button><svg><use href="#v3"/></svg></button><button class="on"><svg><use href="#v4"/></svg></button><button><svg><use href="#v5"/></svg></button><button><svg><use href="#v6"/></svg></button><i class="dn"></i><button><svg><use href="#v7"/></svg></button><i class="dn"></i><button><svg><use href="#v8"/></svg></button><i class="dn"></i><button><svg><use href="#v9"/></svg></button><i class="dn"></i><i class="sep"></i>
  </div>
  <i class="dn end"></i>
</section>

<main>
  <nav class="side">
    <button class="gear" aria-label="设置"><svg><use href="#gear"/></svg></button>
    <button><svg><use href="#b1"/></svg></button><button><svg><use href="#b2"/></svg></button><button class="on" aria-label="部件导航器"><svg><use href="#b3"/></svg></button><button><svg><use href="#b4"/></svg></button>
    <button class="gap"><svg><use href="#b5"/></svg></button><button class="gap"><svg><use href="#b6"/></svg></button><button class="gap"><svg><use href="#b7"/></svg></button>
    <button><svg><use href="#b8"/></svg></button><button><svg><use href="#b9"/></svg></button><button><svg><use href="#b10"/></svg></button><button><svg><use href="#b11"/></svg></button><button><svg><use href="#b12"/></svg></button>
  </nav>

  <aside class="panel">
    <header><h2>部件导航器</h2><button class="max" aria-label="最大化"></button></header>
    <div class="tree">
      <div class="rows">
      <table>
        <colgroup><col class="c1"><col class="c2"><col></colgroup>
        <thead><tr><th>名称<i class="sort"></i></th><th>最新</th><th>附</th></tr></thead>
        <tbody>
        <tr><td><div class="n"><b class="ex">+</b><svg><use href="#mv"/></svg>模型视图</div></td><td></td><td></td></tr>
        <tr><td><div class="n"><b class="ex">+</b><svg class="tk"><use href="#tick"/></svg><svg><use href="#cam"/></svg>摄像机</div></td><td></td><td></td></tr>
        <tr><td><div class="n"><b class="ex">−</b><svg><use href="#fold"/></svg>模型历史记录</div></td><td></td><td></td></tr>
        <tr><td><label class="n k"><input type="checkbox" checked><svg><use href="#csys"/></svg>基准坐标系 (0)</label></td><td><svg class="tk"><use href="#tick"/></svg></td><td></td></tr>
        <tr><td><label class="n k dim"><input type="checkbox" checked><svg><use href="#sk"/></svg>草图 (1) "SKETC...</label></td><td><svg class="tk"><use href="#tick"/></svg></td><td></td></tr>
        <tr><td><label class="n k"><input type="checkbox" checked><svg><use href="#rev"/></svg>旋转 (2)</label></td><td><svg class="tk"><use href="#tick"/></svg></td><td></td></tr>
        <tr><td><label class="n k"><input type="checkbox" checked><svg><use href="#sk"/></svg>草图 (3) "SKETC...</label></td><td><svg class="tk"><use href="#tick"/></svg></td><td></td></tr>
        <tr><td><label class="n k"><input type="checkbox" checked><svg><use href="#ex"/></svg>拉伸 (4)</label></td><td><svg class="tk"><use href="#tick"/></svg></td><td></td></tr>
        <tr><td><label class="n k"><input type="checkbox" checked><svg><use href="#rule"/></svg>直纹 (5)</label></td><td><svg class="tk"><use href="#tick"/></svg></td><td></td></tr>
        <tr><td><label class="n k"><input type="checkbox" checked><svg><use href="#eb"/></svg>边倒圆 (6)</label></td><td><svg class="tk"><use href="#tick"/></svg></td><td></td></tr>
        <tr><td><label class="n k dim"><input type="checkbox" checked><svg><use href="#sk"/></svg>草图 (7) "SKETC...</label></td><td><svg class="tk"><use href="#tick"/></svg></td><td></td></tr>
        <tr><td><label class="n k"><input type="checkbox" checked><svg><use href="#ex"/></svg>拉伸 (8)</label></td><td><svg class="tk"><use href="#tick"/></svg></td><td></td></tr>
        <tr><td><label class="n k dim"><input type="checkbox" checked><svg><use href="#sk"/></svg>草图 (9) "SKETC...</label></td><td><svg class="tk"><use href="#tick"/></svg></td><td></td></tr>
        <tr><td><label class="n k"><input type="checkbox" checked><svg><use href="#ex"/></svg>拉伸 (10)</label></td><td><svg class="tk"><use href="#tick"/></svg></td><td></td></tr>
        <tr><td><label class="n k"><input type="checkbox" checked><svg><use href="#eb"/></svg>边倒圆 (11)</label></td><td><svg class="tk"><use href="#tick"/></svg></td><td></td></tr>
        <tr><td><label class="n k dim"><input type="checkbox" checked><svg><use href="#sk"/></svg>草图 (12) "SKET...</label></td><td><svg class="tk"><use href="#tick"/></svg></td><td></td></tr>
        <tr><td><label class="n k"><input type="checkbox" checked><svg><use href="#ex"/></svg>拉伸 (13)</label></td><td><svg class="tk"><use href="#tick"/></svg></td><td></td></tr>
        <tr><td><label class="n k dim"><input type="checkbox" checked><svg><use href="#sk"/></svg>草图 (14) "SKET...</label></td><td><svg class="tk"><use href="#tick"/></svg></td><td></td></tr>
        <tr><td><label class="n k last"><input type="checkbox" checked><span class="a">A</span>文本 (15)</label></td><td><svg class="tk"><use href="#tick"/></svg></td><td></td></tr>
        <tr><td></td><td></td><td></td></tr><tr><td></td><td></td><td></td></tr><tr><td></td><td></td><td></td></tr><tr><td></td><td></td><td></td></tr><tr><td></td><td></td><td></td></tr><tr><td></td><td></td><td></td></tr><tr><td></td><td></td><td></td></tr><tr><td></td><td></td><td></td></tr><tr><td></td><td></td><td></td></tr>
        </tbody>
      </table>
      </div>
      <div class="hscroll"><button aria-label="向左"><svg viewBox="0 0 8 10"><path d="M7 1L2 5l5 4" fill="none" stroke="#555" stroke-width="2"/></svg></button><div class="track"><i></i></div><button aria-label="向右"><svg viewBox="0 0 8 10"><path d="M1 1l5 4-5 4" fill="none" stroke="#555" stroke-width="2"/></svg></button></div>
    </div>
    <div class="split"></div>
    <button class="fold">相关性<svg><use href="#chev"/></svg></button>
    <button class="fold">细节<svg><use href="#chev"/></svg></button>
    <button class="fold">预览<svg><use href="#chev"/></svg></button>
  </aside>

  <section class="view">
    <div class="doc-tabs"><button class="doc"><svg><use href="#part"/></svg>宋吉能作业.prt<svg class="ed"><use href="#edit"/></svg><svg class="x" viewBox="0 0 10 10"><path d="M1 1l8 8M9 1L1 9" stroke="#fff" stroke-width="2.200"/></svg></button></div>
    <div class="canvas">
    <svg viewBox="368 225 1547 823" preserveAspectRatio="xMidYMid slice">
      <defs>
        <linearGradient id="wall" gradientUnits="userSpaceOnUse" x1="0" y1="225" x2="0" y2="610"><stop offset="0" stop-color="#606060"/><stop offset=".58" stop-color="#636363"/><stop offset=".72" stop-color="#696969"/><stop offset=".82" stop-color="#757575"/><stop offset=".92" stop-color="#7b7b7b"/><stop offset="1" stop-color="#7b7b7b"/></linearGradient>
        <linearGradient id="floor" gradientUnits="userSpaceOnUse" x1="0" y1="565" x2="0" y2="1048"><stop offset="0" stop-color="#666"/><stop offset=".1" stop-color="#6b6b6b"/><stop offset=".22" stop-color="#747474"/><stop offset=".4" stop-color="#797979"/><stop offset=".7" stop-color="#7a7a7a"/><stop offset="1" stop-color="#777"/></linearGradient>
        <filter id="soft" x="-5%" y="-5%" width="110%" height="110%"><feGaussianBlur stdDeviation="5"/></filter>
        <linearGradient id="body" gradientUnits="userSpaceOnUse" x1="1120" y1="467" x2="1107" y2="605"><stop offset="0" stop-color="#fff"/><stop offset=".21" stop-color="#fff"/><stop offset=".25" stop-color="#c4c4c4"/><stop offset=".77" stop-color="#c4c4c4"/><stop offset=".86" stop-color="#555"/><stop offset=".94" stop-color="#000"/><stop offset="1" stop-color="#000"/></linearGradient>
        <linearGradient id="under" gradientUnits="userSpaceOnUse" x1="1120" y1="467" x2="1107" y2="605"><stop offset=".74" stop-opacity="0"/><stop offset=".85" stop-opacity=".6"/><stop offset=".94" stop-opacity="1"/></linearGradient>
        <linearGradient id="cap" gradientUnits="userSpaceOnUse" x1="1434" y1="0" x2="1500" y2="0"><stop offset="0" stop-color="#ddd" stop-opacity="0"/><stop offset=".3" stop-color="#ddd" stop-opacity=".5"/><stop offset=".65" stop-color="#aaa" stop-opacity=".45"/><stop offset="1" stop-color="#777" stop-opacity=".85"/></linearGradient>
        <linearGradient id="shaft" gradientUnits="userSpaceOnUse" x1="700" y1="479" x2="699" y2="497"><stop offset="0" stop-color="#7f8488"/><stop offset=".4" stop-color="#6f7478"/><stop offset=".5" stop-color="#45484a"/><stop offset="1" stop-color="#7a7e80"/></linearGradient>
        <linearGradient id="cone" gradientUnits="userSpaceOnUse" x1="980" y1="478" x2="982" y2="498"><stop offset="0" stop-color="#6f6b66"/><stop offset=".42" stop-color="#65615c"/><stop offset=".5" stop-color="#34322f"/><stop offset="1" stop-color="#4c4a46"/></linearGradient>
      </defs>
      <path d="M300 150h1700v500H300z" fill="url(#wall)"/>
      <path d="M280 602Q600 568 870 568T1300 570Q1650 580 2000 608V1150H280z" fill="url(#floor)" filter="url(#soft)"/>
      <path d="M593 595L1080 637Q1400 661 1503 682Q1480 685 1440 681L1080 645L740 613z" fill="#646464" opacity=".75"/>
      <path d="M850 225v374M850 665v400M368 632.500h449M882 632.500h1050" stroke="#000" stroke-width="1"/>
      <path d="M607 474L850 488V507L600 492L593 487Q596 475 607 474z" fill="url(#shaft)"/>
      <path d="M603 498L850 527V534L606 502z" fill="#55595c"/>
      <path d="M594 485Q591 495 603 498L850 528V518L601 488L601 482z" fill="#050505"/>
      <path d="M601 483L850 502V519.500L601 492z" fill="#fff"/>
      <path d="M850 489L1000 478L1120 467L1117 489L850 504z" fill="url(#cone)"/>
      <path d="M850 526L1109 593V604L850 534z" fill="#4b4945"/>
      <path d="M850 519L1109 583V598L850 528z" fill="#030303"/>
      <path d="M850 502.500Q960 495 1119 488L1110 584L850 519.500z" fill="#fff"/>
      <path d="M1120 467L1446 498Q1498 508 1499 555Q1497 612 1455 632Q1446 635 1432 634L1107 604z" fill="url(#body)"/>
      <path d="M1120 467L1446 498Q1498 508 1499 555Q1497 612 1455 632Q1446 635 1432 634L1107 604z" fill="url(#cap)"/>
      <path d="M1120 467L1446 498Q1498 508 1499 555Q1497 612 1455 632Q1446 635 1432 634L1107 604z" fill="url(#under)"/>
      <path d="M1120 467L1446 498Q1474 504 1486 524Q1476 532 1448 528L1117 497z" fill="#fff" opacity=".8"/>
      <path d="M1201 510Q1206 507 1224 508L1380 522" fill="none" stroke="#555" stroke-dasharray="2 8"/>
      <path d="M1380 522Q1413 528 1415.500 560Q1414 592 1384 597" fill="none" stroke="#333"/>
      <path d="M1384 597L1222 584Q1180 578 1178 553" fill="none" stroke="#777" stroke-dasharray="2 9"/>
      <path d="M1243 531L1317 538M1241 566L1316 573" fill="none" stroke="#777" stroke-dasharray="1 9"/>
      <path d="M1317 538Q1325 542 1324 551L1322 566Q1321 572 1316 573" fill="none" stroke="#333"/>
      <circle cx="1364" cy="560.500" r="13.500" fill="#fff" stroke="#6a382c" stroke-width="1.500"/>
      <text x="1251" y="557" transform="rotate(4 1251 557)" class="temp">37.3℃</text>
      <path d="M1402 632.500h52" stroke="#999"/>
      <path d="M850.500 489v44" stroke="#888" stroke-width="1"/>
      <g fill="none" stroke="#0c0cd8"><path d="M590 486L599 352M590 480v13M582 486h16M548 483L655 493M575 415L662 426L658 478M575 415L570 484"/></g>
      <path d="M658 478v14" stroke="#bbb"/>
      <path d="M596 369l4-18 2 18z" fill="#0c0cd8"/><ellipse cx="553" cy="483" rx="4" ry="3" fill="#0c0cd8"/>
      <g fill="none" stroke="#3d5cff" stroke-width="1.600"><path d="M582 416Q575 422 573 450L568 500Q563 552 572 554L598 552Q606 545 608 502M582 416L606 420Q612 428 611 450L610 473M614 415v14M607 421h14M564 548v14M557 555h14M604 547v14M597 554h14"/></g>
      <path d="M655 493L710 497" stroke="#bbb"/><path d="M706 494l12 4-12 2z" fill="#aaa"/>
      <text x="542" y="488" class="ax" fill="#0c0cd8">Z</text><text x="596" y="350" class="ax" fill="#0c0cd8">Y</text><text x="725" y="504" class="ax" fill="#bbb">X</text>
      <path d="M437 955l25 3-2 28-25-4z" fill="#c4c4c4" opacity=".85"/>
      <path d="M432 978l3-30 2-12 3 14-4 1-1 28z" fill="#2b8f2b"/>
      <path d="M437 982l24 2" stroke="#e99" stroke-width="2"/><path d="M460 983l8-2 9 4-9 3-8-2z" fill="#dc2a2a"/>
      <circle cx="433" cy="980" r="4" fill="#ddd"/><path d="M430 980h6v5l-6 4z" fill="#0a35f0"/>
      <text x="433" y="936" class="ax" fill="#2b9f2b">Y</text><text x="478" y="991" class="ax" fill="#d33">X</text>
    </svg>
    </div>
  </section>
</main>

<footer class="status"><button aria-label="完成"><svg><use href="#flag"/></svg></button><button aria-label="全屏显示"><svg><use href="#full"/></svg></button></footer>
</body>
</html>
```

FILE: styles.css
```css
* { box-sizing: border-box; }
html, body { height: 100%; margin: 0; }
body {
  display: flex;
  flex-direction: column;
  overflow: hidden;
  background: #fff;
  color: #1a1a1a;
  font: 300 14px/18px "Noto Sans", "Noto Sans CJK SC", sans-serif;
}
button {
  display: flex;
  align-items: center;
  justify-content: center;
  flex: none;
  margin: 0;
  padding: 0;
  border: 0;
  background: none;
  color: inherit;
  font: inherit;
  white-space: nowrap;
}
svg { display: block; flex: none; width: 16px; height: 16px; }
.defs { position: absolute; width: 0; height: 0; }
i { flex: none; }
.sep { width: 1px; height: 22px; background: #d4d4d4; }
.dn {
  width: 8px;
  height: 5px;
  background: #111;
  clip-path: polygon(0 0, 100% 0, 50% 100%);
}
.dn.flip { background: #999; clip-path: polygon(50% 0, 100% 100%, 0 100%); }
.dn.bar { height: 7px; clip-path: polygon(0 0, 100% 0, 100% 1px, 0 1px, 0 3px, 100% 3px, 50% 100%, 0 3px); }
.tx { font: 7px "Liberation Sans", sans-serif; fill: #222; }
.tx.r { fill: #b22; }
.tx.y { fill: #888; }
.tx.b { fill: #33b; }

/* title bar */
.title-bar { position: relative; flex: none; display: flex; align-items: center; height: 25px; padding-bottom: 5px; }
.title-bar .ib { width: 23px; }
.title-bar .sep { margin: 0 3px; }
.title-bar .dn { margin: 0 4px; }
.logo { width: 42px; padding-left: 3px; color: #8496a6; font: bold 23px/20px "Noto Sans", sans-serif; }
.tb { gap: 5px; padding: 0 4px; }
.title-bar .tb .dn { margin: 0 2px; }
.title-bar h1 { flex: 1; margin: 0 8px 0 0; text-align: center; font-size: 15px; font-weight: inherit; }
.brand { width: 80px; color: #009a96; font: bold 16px/20px "Noto Sans", sans-serif; }
.wc { display: flex; gap: 18px; padding: 0 11px 0 19px; }
.wc svg { width: 12px; height: 12px; }
.battery { position: absolute; top: -8px; right: 31px; width: 62px; height: 15px; border: 2px solid #777; border-radius: 5px; }
.battery i { display: block; width: 20px; height: 10px; margin-left: 2px; border-radius: 3px; background: #5c0; }

/* ribbon tabs */
.tabs { flex: none; display: flex; align-items: center; height: 32px; background: #dcdcdc; font-size: 16px; }
.tabs > button { height: 32px; padding: 0 13px; }
.tabs .file { width: 90px; margin-right: 2px; background: #529fb8; color: #fff; }
.tabs .on { height: 31px; align-self: flex-end; border-top: 1px solid #aaa; background: #fff; color: #00618a; }
.find { display: flex; align-items: center; width: 157px; height: 24px; margin-left: auto; margin-right: 5px; padding-right: 4px; border: 1px solid #999; background: #fff; }
.find input { flex: 1; min-width: 0; padding: 0 0 0 1px; border: 0; outline: 0; font: 300 14px/18px "Noto Sans", "Noto Sans CJK SC", sans-serif; }
.find input::placeholder { color: #999; }
.tabs > .ti { width: 26px; padding: 0; }
.tabs > .ti:last-child { margin-right: 4px; }

/* ribbon groups */
.ribbon { flex: none; display: flex; height: 106px; padding: 5px 0 2px; border-bottom: 1px solid #d0d0d0; }
.grp { flex: none; display: flex; flex-direction: column; border-right: 1px solid #d8d8d8; }
.grp.rest { flex: 1; border: 0; }
.w-sketch { width: 199px; }
.w-feature { width: 411px; }
.w-sync { width: 193px; }
.w-std { width: 104px; }
.w-s { width: 52px; }
.w-m { width: 58px; }
.w-model { width: 98px; }
.w-xs { width: 29px; }
.w-dim { width: 288px; }
.w-surf { width: 43px; }
.w-asm { width: 205px; }
.w-meas { width: 55px; }
.body { display: flex; align-items: flex-start; }
.pad .body { padding-left: 7px; }
.mid { justify-content: center; }
.cap { display: flex; align-items: center; height: 18px; margin-top: auto; padding-right: 9px; color: #00618a; }
.cap span { flex: 1; min-width: 0; text-align: center; white-space: nowrap; }
.big { flex-direction: column; }
.big > svg { width: 32px; height: 32px; margin-bottom: 6px; }
.big .dn { margin-top: 5px; }
.big:disabled { color: #aaa; }
.b2 { width: 40px; }
.b3 { width: 52px; }
.w-sketch .b3 { width: 56px; }
.b4 { width: 66px; }
.more { width: 48px; }
.more span { display: grid; place-items: center; width: 38px; height: 34px; margin-bottom: 4px; border: 1px solid #ccc; border-radius: 4px; }
.col { display: flex; flex-direction: column; gap: 8px; padding: 1px 5px 0; }
.col button { gap: 4px; align-self: flex-start; }
.col .dn { margin-left: 5px; }
.gallery { display: grid; grid-template-columns: repeat(3, 1fr); width: 117px; height: 78px; border: 1px solid #d4d4d4; }
.gallery svg { width: 22px; height: 22px; }
.scroller { display: flex; flex-direction: column; align-items: center; justify-content: space-between; width: 20px; height: 68px; padding-top: 11px; }
.icons { padding: 2px 0 0 3px; }
.icons div { display: flex; align-items: center; height: 31px; }
.icons .ib { width: 23px; }
.icons .sep { height: 18px; margin: 0 2px; }

/* selection bar */
.select-bar { flex: none; display: flex; align-items: center; height: 36px; border-bottom: 1px solid #8a9498; }
.select-bar .menu { width: 98px; padding: 0 6px 0 9px; gap: 4px; }
.select-bar .sep { height: 28px; }
.sel { display: grid; align-items: center; height: 24px; border: 1px solid #999; }
.sel::after { content: ""; grid-area: 1 / 1; justify-self: end; width: 9px; height: 5px; margin-right: 6px; background: #1a1a1a; clip-path: polygon(0 0, 100% 0, 50% 100%); pointer-events: none; }
.sel select { grid-area: 1 / 1; width: 100%; height: 22px; padding: 0 2px; border: 0; background: none; appearance: none; color: inherit; font: inherit; }
.filter { width: 167px; margin-left: 12px; }
.scope { width: 176px; margin-left: 9px; }
.tools { display: flex; align-items: center; }
.tools button { width: 23px; height: 22px; margin: 0 1px; }
.tools .on { border: 1px solid #b0d4de; background: #cde5eb; }
.tools .dn { margin: 0 4px 0 2px; }
.tools .sep { margin: 0 6px; }
.end { margin-left: auto; margin-right: 7px; }

/* resource bar and part navigator */
main { flex: 1; display: flex; min-height: 0; }
.side { flex: none; display: flex; flex-direction: column; width: 31px; background: #dcdcdc; border-right: 1px solid #999; }
.side button { height: 42px; padding-left: 2px; }
.side svg { width: 23px; height: 23px; }
.side .gear { height: 26px; margin-bottom: 16px; padding: 0; }
.side .gear svg { width: 15px; height: 15px; }
.side .gap { margin-top: 12px; }
.side .on { margin: 0 -1px 0 1px; border: 1px solid #999; border-right: 0; background: #fff; padding: 0; }
.panel { flex: none; display: flex; flex-direction: column; width: 336px; padding: 0 9px 5px 6px; border-right: 1px solid #8a9498; }
.panel > header { display: flex; align-items: center; justify-content: space-between; height: 31px; padding: 1px 7px 0 4px; }
.panel h2 { margin: 0; font-size: 15px; font-weight: inherit; }
.max { width: 14px; height: 13px; border: 1px solid #111; border-top-width: 2px; }
.tree { flex: 1; display: flex; flex-direction: column; min-height: 0; border: 2px solid #dcdcdc; border-width: 1px 2px; }
.rows { flex: 1; min-height: 0; overflow: hidden; }
table { width: 100%; border-collapse: separate; border-spacing: 0; table-layout: fixed; font-size: 15px; }
.c1 { width: 200px; }
.c2 { width: 100px; }
th, td { height: 24px; padding: 0 0 0 6px; border-right: 1px solid #e0e0e0; border-bottom: 1px solid #e6e6e6; text-align: left; font-weight: inherit; line-height: 20px; overflow: hidden; white-space: nowrap; }
th { height: 25px; background: #efefef; border-color: #ccc; }
th:last-child, td:last-child { border-right: 0; }
td:first-child { padding-left: 4px; }
tbody tr:nth-child(even) { background: #fafafa; }
.sort { display: inline-block; width: 12px; height: 6px; margin: 0 0 3px 18px; background: #111; clip-path: polygon(50% 0, 100% 100%, 0 100%); }
.tk { width: 12px; height: 12px; }
.n { display: flex; align-items: center; gap: 3px; height: 23px; }
.ex { display: grid; place-items: center; width: 11px; height: 11px; border: 1px solid #ccc; background: #fff; font: 14px/9px "Liberation Sans", sans-serif; }
.n .tk { margin: 0 -1px 0 3px; }
.k { margin-left: 23px; }
.k::before { content: ""; width: 9px; height: 23px; border-left: 1px dotted #999; background: linear-gradient(#aaa, #aaa) 0 11px / 9px 1px no-repeat; }
.k.last::before { height: 12px; align-self: flex-start; }
.k svg { width: 15px; height: 15px; }
.k input { display: grid; place-items: center; flex: none; width: 12px; height: 12px; margin: 0; border: 1px solid #111; background: #fff; appearance: none; }
.k input::before { content: ""; width: 10px; height: 9px; background: #12b52c; clip-path: polygon(0 40%, 25% 35%, 40% 60%, 85% 0, 100% 10%, 45% 100%); }
.dim { color: #999; }
.last { font-weight: 700; }
.a { width: 15px; text-align: center; font: bold 17px/20px "Liberation Serif", serif; }
.hscroll { flex: none; display: flex; height: 20px; background: #efefef; border-bottom: 1px solid #fff; }
.hscroll button { width: 20px; }
.hscroll svg { width: 8px; height: 10px; }
.track { flex: 1; }
.track i { display: block; width: 78%; height: 19px; background: #cdcdcd; }
.split { flex: none; height: 5px; border: 1px solid #aaa; background: #dcdcdc; }
.fold { justify-content: space-between; height: 28px; padding: 0 6px 0 7px; border-bottom: 2px solid #d4d4d4; color: #00618a; font-size: 18px; line-height: 24px; }
.fold svg { width: 14px; height: 11px; }

/* graphics window */
.view { flex: 1; display: flex; flex-direction: column; min-width: 0; }
.doc-tabs { flex: none; display: flex; height: 25px; border-bottom: 2px solid #529fb8; }
.doc { gap: 5px; padding: 0 7px; background: #529fb8; color: #fff; font-size: 15px; }
.doc svg { width: 15px; height: 15px; }
.doc .ed { width: 12px; height: 12px; }
.doc .x { width: 9px; height: 9px; }
.canvas { flex: 1; min-height: 0; border: 1px solid #ddd; border-top: 0; background: #6c6c6c; }
.canvas > svg { width: 100%; height: 100%; }
.temp { font: bold 18px "Liberation Sans", "Noto Sans CJK SC", sans-serif; fill: #f0f; }
.ax { font: 12px "Liberation Sans", sans-serif; }
.status { flex: none; display: flex; justify-content: flex-end; gap: 4px; height: 17px; padding: 2px 55px 0 0; border-top: 1px solid #aaa; overflow: hidden; }
```
